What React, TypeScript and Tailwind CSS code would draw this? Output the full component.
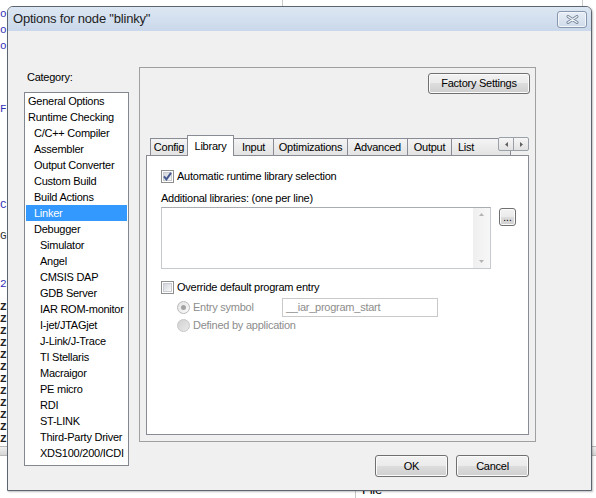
const categories: [string, number][] = [
  ["General Options", 0],
  ["Runtime Checking", 0],
  ["C/C++ Compiler", 1],
  ["Assembler", 1],
  ["Output Converter", 1],
  ["Custom Build", 1],
  ["Build Actions", 1],
  ["Linker", 1],
  ["Debugger", 1],
  ["Simulator", 2],
  ["Angel", 2],
  ["CMSIS DAP", 2],
  ["GDB Server", 2],
  ["IAR ROM-monitor", 2],
  ["I-jet/JTAGjet", 2],
  ["J-Link/J-Trace", 2],
  ["TI Stellaris", 2],
  ["Macraigor", 2],
  ["PE micro", 2],
  ["RDI", 2],
  ["ST-LINK", 2],
  ["Third-Party Driver", 2],
  ["XDS100/200/ICDI", 2],
];

const indent = ["pl-[2px]", "pl-[8px]", "pl-[14px]"];

// editor lines peeking out behind the dialog
const editorLines: [string, string][] = [
  ["o", "text-[#2f2fb8]"],
  ["o", "text-[#2f2fb8]"],
  ["o", "text-[#2f2fb8]"],
  ["", ""],
  ["", ""],
  ["", ""],
  ["F", "text-[#2f2fb8]"],
  ["", ""],
  ["", ""],
  ["", ""],
  ["", ""],
  ["", ""],
  ["C", "text-[#2f2fb8]"],
  ["", ""],
  ["G", "text-[#333]"],
  ["", ""],
  ["", ""],
  ["2", "text-[#2f2fb8]"],
];

const tabs = [
  { label: "Config", w: "w-[38px]" },
  { label: "Library", w: "w-[47px]", active: true },
  { label: "Input", w: "w-[41px]" },
  { label: "Optimizations", w: "w-[75px]" },
  { label: "Advanced", w: "w-[61px]" },
  { label: "Output", w: "w-[45px]" },
  { label: "List", w: "w-[60px]", left: true },
];

const btn =
  "flex items-center justify-center rounded-[3px] border border-[#707070] bg-[linear-gradient(#f2f2f2_0%,#ebebeb_50%,#dddddd_50%,#cfcfcf_100%)] shadow-[inset_0_0_0_1px_#fbfbfb] text-black";

function CheckBox({ checked }: { checked?: boolean }) {
  return (
    <span className="relative flex h-[13px] w-[13px] shrink-0 items-center justify-center border border-[#8e8f8f] bg-white">
      <span className="h-[9px] w-[9px] border border-[#c9ccd2] bg-[linear-gradient(135deg,#d3d6db,#f8f8f8)]" />
      {checked && (
        <svg className="absolute left-[1px] top-[1px]" width="9" height="9" viewBox="0 0 9 9">
          <path d="M1 4.4 L3.4 7.3 L8 0.9" stroke="#44598f" strokeWidth="2" fill="none" />
        </svg>
      )}
    </span>
  );
}

function Radio({ checked }: { checked?: boolean }) {
  return checked ? (
    <span className="flex h-[13px] w-[13px] shrink-0 items-center justify-center rounded-full border border-[#b9b9b9] bg-[linear-gradient(135deg,#e4e4e4,#fafafa)]">
      <span className="h-[5px] w-[5px] rounded-full bg-[#a3a3a3]" />
    </span>
  ) : (
    <span className="h-[13px] w-[13px] shrink-0 rounded-full border border-[#c6c6c6] bg-[linear-gradient(135deg,#d2d2d2,#e9e9e9)]" />
  );
}

function Arrow({ dir }: { dir: "left" | "right" | "up" | "down" }) {
  const d = {
    left: "M3 0 L0 2.5 L3 5 Z",
    right: "M0 0 L3 2.5 L0 5 Z",
    up: "M0 3 L2.5 0 L5 3 Z",
    down: "M0 0 L2.5 3 L5 0 Z",
  }[dir];
  const vertical = dir === "up" || dir === "down";
  return (
    <svg width={vertical ? 5 : 3} height={vertical ? 3 : 5} viewBox={vertical ? "0 0 5 3" : "0 0 3 5"}>
      <path d={d} fill={vertical ? "#b4b4b4" : "#606060"} />
    </svg>
  );
}

export default function App() {
  return (
    <div className="relative h-[498px] w-[596px] overflow-hidden bg-white font-['Liberation_Sans',Arial,sans-serif] text-[11px] tracking-[-0.25px] text-black">
      {/* window behind the dialog */}
      <div className="flex h-full flex-col">
        <div className="flex h-[6px]">
          <div className="ml-[282px] h-full w-px bg-[#c8c8c8]" />
          <div className="ml-[299px] h-full w-px bg-[#c8c8c8]" />
        </div>
        <div className="flex w-[7px] flex-col overflow-hidden font-['Liberation_Mono',monospace] text-[11px] leading-[16px] tracking-normal">
          {editorLines.map(([t, c], i) => (
            <div key={i} className={`h-[16px] whitespace-pre ${c}`}>
              {t}
            </div>
          ))}
        </div>
        <div className="mt-[9px] flex w-[7px] flex-col overflow-hidden font-['Liberation_Mono',monospace] text-[11px] font-bold leading-[12px] tracking-normal text-[#222]">
          {Array.from({ length: 12 }).map((_, i) => (
            <div key={i} className="h-[12px]">
              Z
            </div>
          ))}
        </div>
        <div className="mt-[2px] h-[10px] border-y border-[#b9b9b9] bg-[linear-gradient(#f0f0f0,#d6d6d6)]" />
        <div className="flex flex-1">
          <div className="ml-[355px] w-px bg-[#c8c8c8]" />
          <div className="ml-[6px] mt-[26px] text-[13px] leading-[16px]">File</div>
        </div>
      </div>

      {/* dialog window */}
      <div className="absolute left-[7px] top-[6px] flex h-[485px] w-[585px] flex-col rounded-t-[6px] border border-[#5d6670] bg-[#f0f0f0] shadow-[1px_1px_2px_rgba(0,0,0,0.25)]">
        <div className="flex h-[24px] items-center justify-between rounded-t-[5px] bg-[linear-gradient(#dde7f3,#c9d8ea)] pl-[5px] pr-[4px]">
          <span className="text-[13px] tracking-[-0.2px] text-[#1e1e1e]">Options for node "blinky"</span>
          <div className="flex h-[17px] w-[30px] items-center justify-center rounded-[3px] border border-[#8696ad] bg-[linear-gradient(#e8eef6,#cfdbea)] shadow-[inset_0_0_0_1px_#f3f6fa]">
            <svg width="13" height="9" viewBox="0 0 13 9">
              <path d="M2 1.5 L11 7.5 M11 1.5 L2 7.5" stroke="#76869c" strokeWidth="3" strokeLinecap="round" />
              <path d="M2 1.5 L11 7.5 M11 1.5 L2 7.5" stroke="#f5f8fb" strokeWidth="1.2" strokeLinecap="round" />
            </svg>
          </div>
        </div>

        <div className="flex flex-1 items-start gap-[10px] pl-[16px] pt-[36px]">
          {/* category list */}
          <div className="flex w-[105px] flex-col pt-[2px]">
            <div className="h-[16px] pl-[3px] leading-[16px]">Category:</div>
            <div className="mt-[7px] flex h-[374px] flex-col border border-[#828790] bg-white">
              {categories.map(([name, level]) => {
                const sel = name === "Linker";
                return (
                  <div
                    key={name}
                    className={`mx-[1px] h-[16px] whitespace-nowrap leading-[16px] ${indent[level]} ${
                      sel ? "bg-[#3399ff] text-white" : ""
                    }`}
                  >
                    {name}
                  </div>
                );
              })}
            </div>
          </div>

          <div className="flex flex-col">
            {/* options panel */}
            <div className="flex h-[375px] w-[397px] flex-col border border-[#a0a0a0]">
              <div className="flex justify-end pr-[5px] pt-[5px]">
                <button className={`${btn} h-[21px] w-[102px]`}>Factory Settings</button>
              </div>

              <div className="mt-[41px] px-[6px]">
                <div className="relative flex h-[20px] items-end pl-[5px]">
                  {tabs.map((t) =>
                    t.active ? (
                      <div
                        key={t.label}
                        className={`${t.w} relative z-10 -mb-px -ml-px flex h-[21px] items-start justify-center border border-b-0 border-[#898c95] bg-white pt-[2px] leading-[16px]`}
                      >
                        {t.label}
                      </div>
                    ) : (
                      <div
                        key={t.label}
                        className={`${t.w} -ml-px flex h-[17px] items-center border border-b-0 border-[#898c95] bg-[linear-gradient(#f4f4f4,#e3e3e3)] leading-[16px] ${
                          t.left ? "justify-start pl-[6px]" : "justify-center"
                        }`}
                      >
                        {t.label}
                      </div>
                    )
                  )}
                  <div className="absolute right-0 top-[2px] z-20 flex h-[14px]">
                    <div className="flex w-[16px] items-center justify-center rounded-l-[2px] border border-[#9aa0a8] bg-[linear-gradient(#f6f6f6,#e2e2e2)]">
                      <Arrow dir="left" />
                    </div>
                    <div className="-ml-px flex w-[16px] items-center justify-center rounded-r-[2px] border border-[#9aa0a8] bg-[linear-gradient(#f6f6f6,#e2e2e2)]">
                      <Arrow dir="right" />
                    </div>
                  </div>
                </div>

                {/* Library page */}
                <div className="h-[280px] border border-[#898c95] bg-white pl-[14px]">
                  <div className="mt-[12px] flex h-[16px] items-center gap-[3px]">
                    <CheckBox checked />
                    <span>Automatic runtime library selection</span>
                  </div>
                  <div className="mt-[6px] h-[16px] leading-[16px]">Additional libraries: (one per line)</div>
                  <div className="mt-[1px] flex items-start">
                    <div className="flex h-[62px] w-[330px] justify-end border border-[#c6c9ce] border-t-[#a9adb2] bg-white">
                      <div className="flex w-[17px] flex-col items-center justify-between bg-[linear-gradient(90deg,#efefef,#f7f7f7)] py-[5px]">
                        <Arrow dir="up" />
                        <Arrow dir="down" />
                      </div>
                    </div>
                    <button className={`${btn} ml-[8px] mt-[1px] h-[18px] w-[17px] items-end pb-[3px] text-[10px] leading-[8px] tracking-normal`}>
                      ...
                    </button>
                  </div>
                  <div className="mt-[10px] flex h-[16px] items-center gap-[3px]">
                    <CheckBox />
                    <span>Override default program entry</span>
                  </div>
                  <div className="mt-[3px] flex h-[19px] items-center pl-[16px] text-[#8d8d8d]">
                    <Radio checked />
                    <span className="w-[92px] pl-[3px]">Entry symbol</span>
                    <div className="flex h-[19px] w-[156px] items-center border border-[#c9c9c9] bg-white pl-[3px]">
                      __iar_program_start
                    </div>
                  </div>
                  <div className="flex h-[16px] items-center pl-[16px] text-[#8d8d8d]">
                    <Radio />
                    <span className="pl-[3px]">Defined by application</span>
                  </div>
                </div>
              </div>
            </div>

            <div className="mt-[13px] flex justify-end gap-[8px] pr-[7px]">
              <button className={`${btn} h-[22px] w-[73px]`}>OK</button>
              <button className={`${btn} h-[22px] w-[73px]`}>Cancel</button>
            </div>
          </div>
        </div>
      </div>
    </div>
  );
}
